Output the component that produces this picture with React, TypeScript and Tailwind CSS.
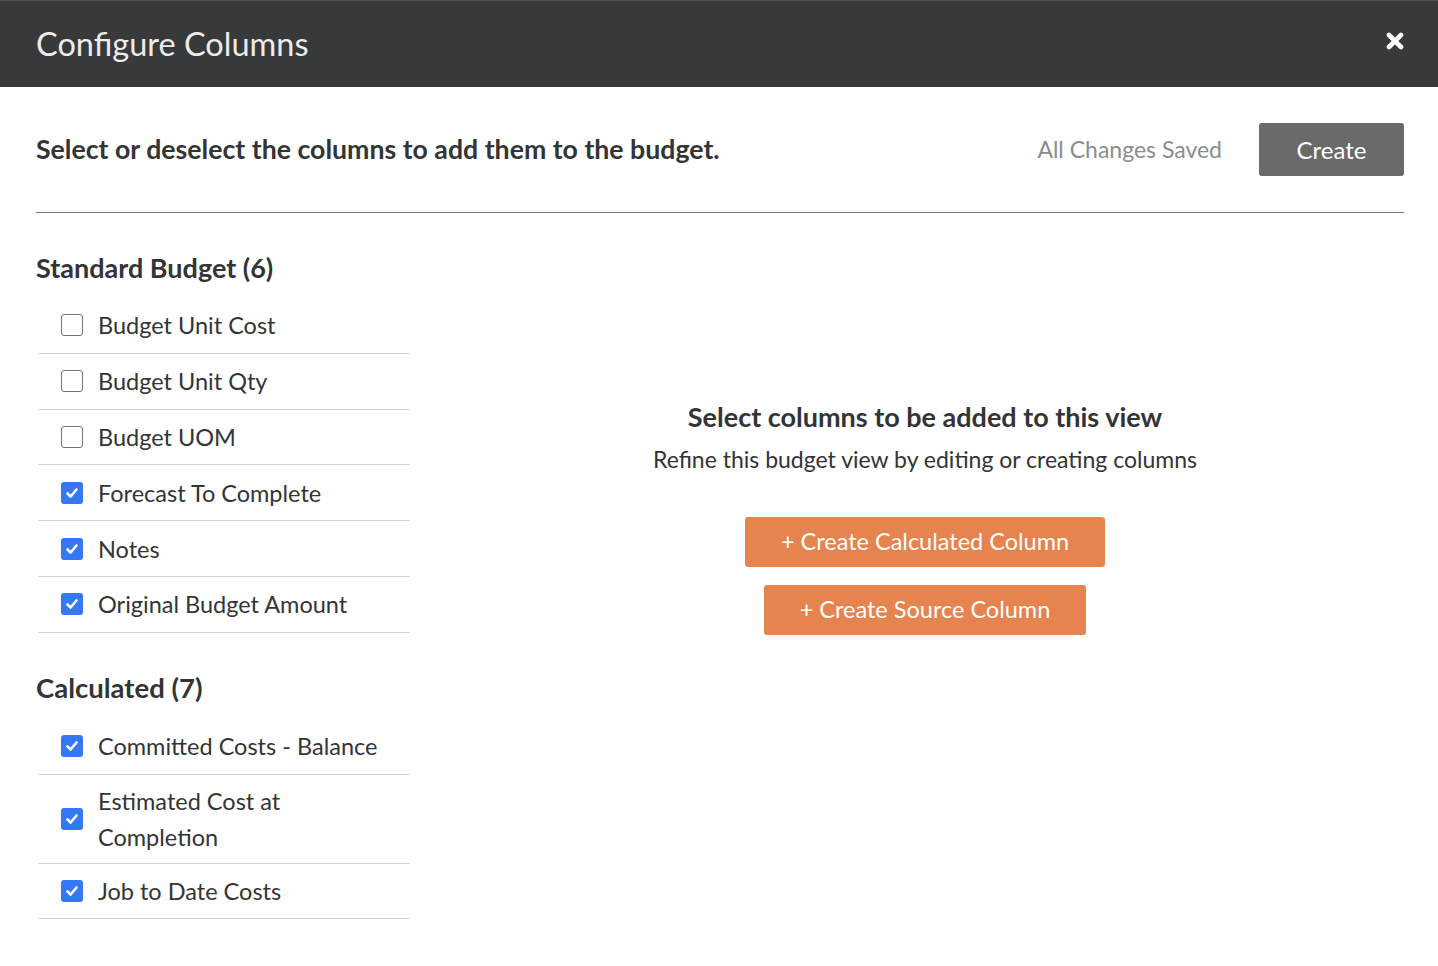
import React, { useState } from "react";

type Col = { label: string; checked: boolean };

const standardInit: Col[] = [
  { label: "Budget Unit Cost", checked: false },
  { label: "Budget Unit Qty", checked: false },
  { label: "Budget UOM", checked: false },
  { label: "Forecast To Complete", checked: true },
  { label: "Notes", checked: true },
  { label: "Original Budget Amount", checked: true },
];

const calculatedInit: Col[] = [
  { label: "Committed Costs - Balance", checked: true },
  { label: "Estimated Cost at Completion", checked: true },
  { label: "Job to Date Costs", checked: true },
];

function Checkbox({ checked }: { checked: boolean }) {
  if (checked) {
    return (
      <span className="flex h-[22px] w-[22px] shrink-0 items-center justify-center rounded-[3px] bg-[#3478f6]">
        <svg width="14" height="14" viewBox="0 0 14 14" fill="none">
          <path d="M2.5 7.5 L5.6 10.5 L11.5 3.5" stroke="#fff" strokeWidth="2.6" strokeLinecap="round" strokeLinejoin="round" />
        </svg>
      </span>
    );
  }
  return <span className="h-[22px] w-[22px] shrink-0 rounded-[3px] border-[1.5px] border-[#767676] bg-white" />;
}

function ColumnList({ items, onToggle }: { items: Col[]; onToggle: (i: number) => void }) {
  return (
    <ul className="ml-[2px]">
      {items.map((c, i) => (
        <li
          key={c.label}
          onClick={() => onToggle(i)}
          className="flex min-h-[55.8px] cursor-pointer items-center border-b border-[#d4d4d4] py-2 pl-[23px]"
        >
          <Checkbox checked={c.checked} />
          <span className="ml-[15px] w-[290px] text-[23.5px] leading-[36px] text-[#333436]">{c.label}</span>
        </li>
      ))}
    </ul>
  );
}

export default function App() {
  const [standard, setStandard] = useState(standardInit);
  const [calculated, setCalculated] = useState(calculatedInit);

  const toggle = (list: Col[], set: (c: Col[]) => void) => (i: number) =>
    set(list.map((c, j) => (j === i ? { ...c, checked: !c.checked } : c)));

  return (
    <div className="min-h-screen bg-white" style={{ fontFamily: "Lato, 'Open Sans', sans-serif" }}>
      <div className="flex h-[87px] items-center justify-between border-t border-[#555] bg-[#38393b] pl-9 pr-[34px]">
        <h1 className="text-[32.5px] font-normal text-[#ececec]">Configure Columns</h1>
        <button className="mb-[6px] text-white">
          <svg width="18" height="18" viewBox="0 0 18 18">
            <path d="M3 3 L15 15 M15 3 L3 15" stroke="#fff" strokeWidth="4.6" strokeLinecap="round" />
          </svg>
        </button>
      </div>

      <div className="pl-9 pr-[34px]">
        <div className="flex items-center justify-between border-b border-[#7a7a7a] py-9">
          <p className="text-[26.7px] font-bold text-[#333436]">Select or deselect the columns to add them to the budget.</p>
          <div className="flex items-center gap-[37px]">
            <span className="text-[23px] text-[#8c8c8c]">All Changes Saved</span>
            <button className="h-[53px] w-[145px] rounded-[3px] bg-[#6a6a6a] text-[24px] text-white">Create</button>
          </div>
        </div>

        <div className="flex gap-9">
          <div className="w-[374px]">
            <h2 className="mt-[37px] mb-[12px] text-[27px] font-bold leading-[36px] text-[#333436]">Standard Budget (6)</h2>
            <ColumnList items={standard} onToggle={toggle(standard, setStandard)} />
            <h2 className="mt-[37px] mb-[13px] text-[27.5px] font-bold leading-[36px] text-[#333436]">Calculated (7)</h2>
            <ColumnList items={calculated} onToggle={toggle(calculated, setCalculated)} />
          </div>

          <div className="flex flex-1 flex-col items-center pt-[186px]">
            <h3 className="text-[27px] font-bold leading-[36px] text-[#333436]">Select columns to be added to this view</h3>
            <p className="mt-[6px] text-[23px] leading-[36px] text-[#333436]">Refine this budget view by editing or creating columns</p>
            <button className="mt-[40px] h-[50px] rounded-[3px] bg-[#e5844f] px-9 text-[23.5px] text-white">
              + Create Calculated Column
            </button>
            <button className="mt-[18px] h-[50px] rounded-[3px] bg-[#e5844f] px-9 text-[23.5px] text-white">
              + Create Source Column
            </button>
          </div>
        </div>
      </div>
    </div>
  );
}
